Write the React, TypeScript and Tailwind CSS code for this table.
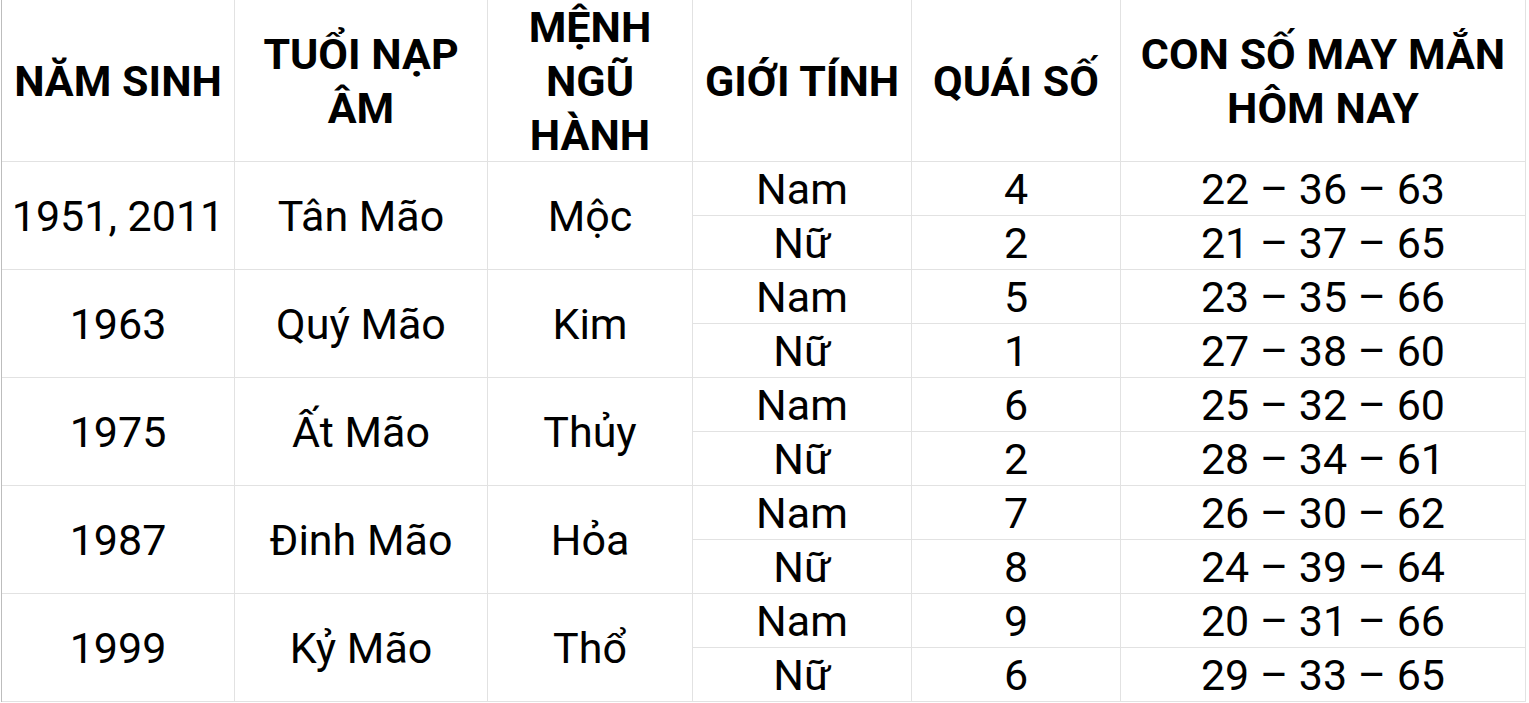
import React from "react";

const groups = [
  { year: "1951, 2011", tuoi: "Tân Mão", menh: "Mộc", rows: [["Nam", "4", "22 – 36 – 63"], ["Nữ", "2", "21 – 37 – 65"]] },
  { year: "1963", tuoi: "Quý Mão", menh: "Kim", rows: [["Nam", "5", "23 – 35 – 66"], ["Nữ", "1", "27 – 38 – 60"]] },
  { year: "1975", tuoi: "Ất Mão", menh: "Thủy", rows: [["Nam", "6", "25 – 32 – 60"], ["Nữ", "2", "28 – 34 – 61"]] },
  { year: "1987", tuoi: "Đinh Mão", menh: "Hỏa", rows: [["Nam", "7", "26 – 30 – 62"], ["Nữ", "8", "24 – 39 – 64"]] },
  { year: "1999", tuoi: "Kỷ Mão", menh: "Thổ", rows: [["Nam", "9", "20 – 31 – 66"], ["Nữ", "6", "29 – 33 – 65"]] },
];

const headers: string[][] = [
  ["NĂM SINH"],
  ["TUỔI NẠP", "ÂM"],
  ["MỆNH", "NGŨ", "HÀNH"],
  ["GIỚI TÍNH"],
  ["QUÁI SỐ"],
  ["CON SỐ MAY MẮN", "HÔM NAY"],
];

const cell = "flex items-center justify-center text-center border-r border-b border-[#e2e2e2]";

export default function App() {
  return (
    <div className="w-[1529px] h-[703px] bg-white overflow-hidden text-black" style={{ fontFamily: "Roboto, 'Noto Sans', sans-serif" }}>
      <div className="ml-[1px] w-fit border-l border-[#bdbdbd] grid grid-cols-[233px_253px_205px_219px_209px_405px] grid-rows-[162px_repeat(10,54px)]">
        {headers.map((h, i) => (
          <div key={i} className={`${cell} flex-col font-bold text-[43px] leading-[54px]`}>
            {h.map((l, j) => (
              <span key={j} className="block whitespace-nowrap">{l}</span>
            ))}
          </div>
        ))}
        {groups.map((g, gi) => (
          <React.Fragment key={gi}>
            <div className={`${cell} row-span-2 text-[43px] leading-[54px]`}>{g.year}</div>
            <div className={`${cell} row-span-2 text-[43px] leading-[54px]`}>{g.tuoi}</div>
            <div className={`${cell} row-span-2 text-[43px] leading-[54px]`}>{g.menh}</div>
            {g.rows.map((r, ri) => (
              <React.Fragment key={ri}>
                <div className={`${cell} text-[43px] leading-[54px]`}>{r[0]}</div>
                <div className={`${cell} text-[43px] leading-[54px]`}>{r[1]}</div>
                <div className={`${cell} text-[43px] leading-[54px]`}>{r[2]}</div>
              </React.Fragment>
            ))}
          </React.Fragment>
        ))}
      </div>
    </div>
  );
}
